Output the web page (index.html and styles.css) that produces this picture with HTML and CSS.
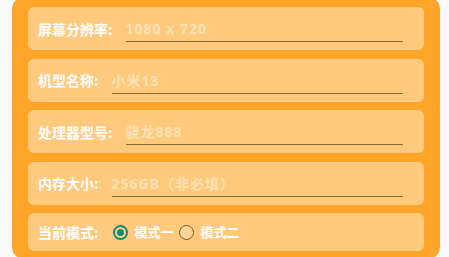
FILE: index.html
```html
<!DOCTYPE html>
<html lang="zh-CN">
<head>
<meta charset="utf-8">
<title>设备信息</title>
<link rel="stylesheet" href="styles.css">
</head>
<body>
<div class="panel">
  <div class="card">
    <span class="label">屏幕分辨率:</span>
    <div class="field">1080 x 720</div>
  </div>
  <div class="card">
    <span class="label">机型名称:</span>
    <div class="field">小米13</div>
  </div>
  <div class="card">
    <span class="label">处理器型号:</span>
    <div class="field">骁龙888</div>
  </div>
  <div class="card">
    <span class="label">内存大小:</span>
    <div class="field">256GB（非必填）</div>
  </div>
  <div class="card card-radio">
    <span class="label">当前模式:</span>
    <div class="radios">
      <span class="radio checked"></span><span class="radio-text">模式一</span>
      <span class="radio"></span><span class="radio-text">模式二</span>
    </div>
  </div>
</div>
</body>
</html>
```

FILE: styles.css
```css
html, body {
  margin: 0;
  padding: 0;
  background: #fafafa;
  overflow: hidden;
}
body {
  width: 449px;
  height: 257px;
  font-family: "Noto Sans CJK SC", "Noto Sans", sans-serif;
  font-weight: 700;
  font-size: 14px;
}
.panel {
  margin: -3px 0 0 12px;
  width: 428px;
  box-sizing: border-box;
  padding: 10px 16px 8px 16px;
  background: #ffa62a;
  border-radius: 12px;
  display: flex;
  flex-direction: column;
  gap: 8.5px;
}
.card {
  height: 43px;
  box-sizing: border-box;
  background: #ffc97e;
  border-radius: 6px;
  display: flex;
  align-items: center;
  padding: 0 21px 0 10px;
}
.card-radio {
  height: 38px;
}
.label {
  color: #ffffff;
  white-space: nowrap;
  line-height: 20px;
}
.field {
  flex: 1;
  margin-left: 13px;
  height: 27px;
  line-height: 27px;
  box-sizing: border-box;
  border-bottom: 1px solid #8e6a35;
  color: #ffe2b4;
  white-space: nowrap;
  font-family: "Noto Sans", "Noto Sans CJK SC", sans-serif;
  letter-spacing: 1px;
}
.radios {
  display: flex;
  align-items: center;
  margin-left: 14px;
}
.radio {
  width: 15px;
  height: 15px;
  box-sizing: border-box;
  border-radius: 50%;
  border: 1.5px solid #7d5a26;
  background: #ffd596;
  display: flex;
  align-items: center;
  justify-content: center;
}
.radio.checked {
  border: 2px solid #148a6c;
}
.radio.checked::after {
  content: "";
  width: 7px;
  height: 7px;
  border-radius: 50%;
  background: #148a6c;
}
.radio-text {
  color: #ffffff;
  font-size: 13px;
  margin-left: 7px;
  margin-right: 5px;
  line-height: 20px;
}
```
